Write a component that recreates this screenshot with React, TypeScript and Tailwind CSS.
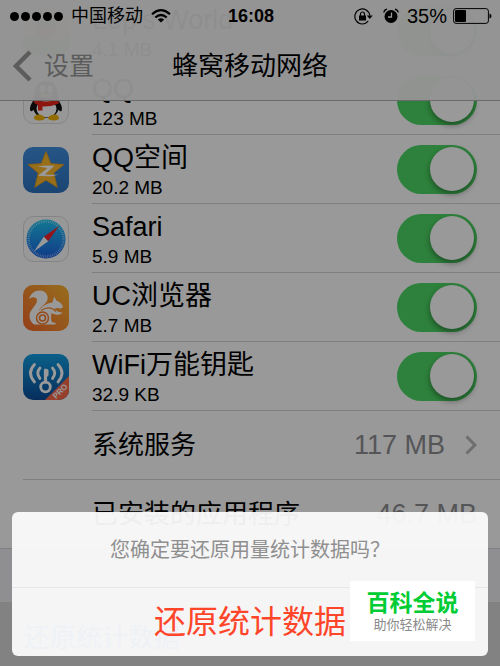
import { useState } from 'react'

type AppRow = {
  id: string
  name: string
  usage: string
  icon: React.ReactNode
}

function WorldIcon() {
  return (
    <svg viewBox="0 0 46 46" className="w-[46px] h-[46px] shrink-0">
      <rect width="46" height="46" rx="10" fill="#f4c9b4" />
      <path d="M0 30q12-8 23-2t23-2v10a10 10 0 0 1-10 10H10A10 10 0 0 1 0 36z" fill="#4fbf3d" />
      <circle cx="23" cy="20" r="10" fill="#c98a52" />
      <path d="M11 17q12-16 24 0z" fill="#2f9e3a" />
    </svg>
  )
}

function QQIcon() {
  return (
    <svg viewBox="0 0 46 46" className="w-[46px] h-[46px] shrink-0">
      <rect x=".5" y=".5" width="45" height="45" rx="10" fill="#fcfcfc" stroke="#dcdcdc" />
      <path d="M12 21C8 25 6 30 7.500 33c1 1 3-1 5-3zM34 21c4 4 6 9 4.500 12-1 1-3-1-5-3z" fill="#111" />
      <path d="M23 3c-8 0-11.500 6-11.500 13C8 25 8.500 40 23 40s15-15 11.500-24C34.500 9 31 3 23 3z" fill="#111" />
      <ellipse cx="23.500" cy="31" rx="10" ry="8.500" fill="#fff" />
      <path d="M11 40c0-2.500 3-4 5.500-3.500 2.500.5 5.500 2 5.500 3.500 0 1.600-3 2.500-6 2.500s-5-.9-5-2.500zM36 40c0-2.500-3-4-5.500-3.500-2.500.5-5.500 2-5.500 3.500 0 1.600 3 2.500 6 2.500s5-.9 5-2.500z" fill="#f5b400" />
      <ellipse cx="19.500" cy="11" rx="2.800" ry="4" fill="#fff" />
      <ellipse cx="27" cy="11" rx="2.800" ry="4" fill="#fff" />
      <ellipse cx="23" cy="17.500" rx="6.500" ry="2" fill="#f5ac00" />
      <path d="M11 21q12 5 24 0l1 4.500q-8 3.500-16.500 3v4H15V27q-2.500-1-4-2.500z" fill="#e8271b" />
    </svg>
  )
}

function QzoneIcon() {
  return (
    <svg viewBox="0 0 46 46" className="w-[46px] h-[46px] shrink-0">
      <defs>
        <linearGradient id="qzone" x1="0" y1="0" x2="0" y2="1">
          <stop offset="0" stopColor="#3f8fe0" />
          <stop offset="1" stopColor="#2c74c0" />
        </linearGradient>
      </defs>
      <rect width="46" height="46" rx="10" fill="url(#qzone)" />
      <path
        d="M23 4.500l4.800 12.100 13.200.9-10.200 8.400 3.400 14.400L23 33.200l-11.200 7.100 3.400-14.400L5 17.500l13.200-.9z"
        fill="#fcb92c"
        stroke="#e99b16"
        strokeWidth=".8"
        strokeLinejoin="round"
      />
      <path d="M14.500 19.500q8.500-1.500 17-.8L22 27.200q7 1 13.500.2-7 2.800-20.500 1.400L24.500 21q-5-.6-10-1.500z" fill="#fff" />
    </svg>
  )
}

function SafariIcon() {
  return (
    <svg viewBox="0 0 46 46" className="w-[46px] h-[46px] shrink-0">
      <defs>
        <linearGradient id="safari" x1="0" y1="0" x2="0" y2="1">
          <stop offset="0" stopColor="#1fc8f5" />
          <stop offset="1" stopColor="#1d62e4" />
        </linearGradient>
      </defs>
      <rect x=".5" y=".5" width="45" height="45" rx="10" fill="#fdfdfd" stroke="#dcdcdc" />
      <circle cx="23" cy="23" r="19.500" fill="url(#safari)" />
      <circle cx="23" cy="23" r="17.500" fill="none" stroke="#fff" strokeWidth="2.500" strokeDasharray=".6 1.230" opacity=".65" />
      <path d="M36 10L20.800 20.800 25.200 25.200z" fill="#f5222d" />
      <path d="M11 35.500L20.800 20.800 25.200 25.200z" fill="#fff" />
    </svg>
  )
}

function UCIcon() {
  return (
    <svg viewBox="0 0 46 46" className="w-[46px] h-[46px] shrink-0">
      <defs>
        <linearGradient id="uc" x1="1" y1="0" x2="0" y2="1">
          <stop offset="0" stopColor="#fdb733" />
          <stop offset="1" stopColor="#f7692a" />
        </linearGradient>
      </defs>
      <rect width="46" height="46" rx="10" fill="url(#uc)" />
      <path d="M6 14C7.500 8.500 12 5.300 17 5.500c5.500.2 8.500 4.500 7.500 9-1 4.500-6.500 6-9 11.500 3.500-4.500 7-7.500 14-8.500l1.700-6 2.300 4.200c3 .8 5.500 3 6.500 6-.8 1.600-2.500 2-4.500 1.600-1.600-.4-3-.2-4 .7 2.500 2.300 5 3.500 8 3.700-3.500 3-7.500 2.300-11 .3L28 32c.3 2.500.2 4.500 1.200 5.300l3.300.5v1.700H11C8 37.500 6.300 34 6.500 30c.3-5.500 8-10 7.500-15-.4-3.500-5-3.500-8-1z" fill="#fff" />
      <path d="M18 25.500q9-5.500 15 1" fill="none" stroke="#f98a2f" strokeWidth="1.200" />
      <circle cx="19.500" cy="33" r="6" fill="#fff" stroke="#f77c2b" strokeWidth="1.500" />
      <circle cx="19.500" cy="33" r="3" fill="#fff" stroke="#f77c2b" strokeWidth="1.600" />
    </svg>
  )
}

function WifiKeyIcon() {
  return (
    <svg viewBox="0 0 46 46" className="w-[46px] h-[46px] shrink-0">
      <defs>
        <linearGradient id="wifikey" x1="0" y1="0" x2="0" y2="1">
          <stop offset="0" stopColor="#12a0e4" />
          <stop offset="1" stopColor="#0c4d9b" />
        </linearGradient>
        <clipPath id="wifikeyClip">
          <rect width="46" height="46" rx="10" />
        </clipPath>
      </defs>
      <g clipPath="url(#wifikeyClip)">
        <rect width="46" height="46" fill="url(#wifikey)" />
        <path d="M46 22v24H22z" fill="#fb6a4c" />
      </g>
      <g fill="none" stroke="#fff" strokeWidth="2.800" strokeLinecap="round">
        <path d="M11.500 10.500q-8 8.500 0 17.500M17 14q-4.500 5 0 10.500M35 10.500q8 8.500 0 17.500M29.500 14q4.500 5 0 10.500" />
        <circle cx="22.500" cy="33" r="4.800" />
        <path d="M22.500 28V16" strokeWidth="3.200" />
        <path d="M24 16.500v4.500" strokeWidth="3" />
      </g>
      <text x="37" y="40" fontSize="8" textAnchor="middle" fill="#fff" fontFamily="Liberation Sans, sans-serif" fontWeight="bold" transform="rotate(-45 37 37)">
        PRO
      </text>
    </svg>
  )
}

function Chevron() {
  return (
    <svg viewBox="0 0 12 20" className="w-3 h-5 shrink-0" fill="none" stroke="#b8b8bc" strokeWidth="3">
      <path d="M1.500 1.500L10 10l-8.500 8.500" />
    </svg>
  )
}

const apps: AppRow[] = [
  { id: 'world', name: "Lep's World", usage: '4.1 MB', icon: <WorldIcon /> },
  { id: 'qq', name: 'QQ', usage: '123 MB', icon: <QQIcon /> },
  { id: 'qzone', name: 'QQ空间', usage: '20.2 MB', icon: <QzoneIcon /> },
  { id: 'safari', name: 'Safari', usage: '5.9 MB', icon: <SafariIcon /> },
  { id: 'uc', name: 'UC浏览器', usage: '2.7 MB', icon: <UCIcon /> },
  { id: 'wifikey', name: 'WiFi万能钥匙', usage: '32.9 KB', icon: <WifiKeyIcon /> },
]

function StatusBar() {
  return (
    <div className="grid grid-cols-[1fr_auto_1fr] items-center h-8 pl-[10px] pr-2">
      <div className="flex items-center">
        <div className="flex gap-0.5">
          {[0, 1, 2, 3, 4].map(i => (
            <span key={i} className="w-[9px] h-[9px] rounded-full bg-black" />
          ))}
        </div>
        <span className="ml-2 text-[18px] leading-6">中国移动</span>
        <svg viewBox="0 0 20 14" className="w-5 h-[14px] ml-2" fill="none" stroke="#000" strokeWidth="2.200">
          <path d="M1 5.200q9-8 18 0M4.300 8.500q5.700-5 11.400 0" />
          <path d="M10 13.500L6.800 10.500q3.200-2.500 6.400 0z" fill="#000" stroke="none" />
        </svg>
      </div>
      <span className="text-[18px] leading-6 font-bold">16:08</span>
      <div className="flex items-center justify-end">
        <svg viewBox="0 0 19 17" className="w-[19px] h-[17px]" fill="none" stroke="#000" strokeWidth="1.200">
          <path d="M14.200 13.200A7.500 7.500 0 1 1 15.800 7.500" />
          <path d="M12.800 7.400h6l-3 3.600z" fill="#000" stroke="none" />
          <rect x="5" y="7.500" width="7" height="5" fill="#000" stroke="none" />
          <path d="M6.500 8V6a2 2 0 0 1 4 0v2" />
        </svg>
        <svg viewBox="0 0 16 16" className="w-4 h-4 ml-[10px]" fill="none" stroke="#000">
          <circle cx="8" cy="8.500" r="6.500" fill="#000" stroke="none" />
          <path d="M.8 4.500Q1.300 1.800 4 1.200M15.200 4.500Q14.700 1.800 12 1.200" strokeWidth="1.300" />
          <path d="M8.500 4.500V9H5" stroke="#fff" strokeWidth="1.300" />
        </svg>
        <span className="ml-2 text-[20px] leading-6">35%</span>
        <svg viewBox="0 0 39 16" className="w-[39px] h-4 ml-[6px]">
          <rect x=".6" y=".6" width="34.800" height="14.800" rx="2.500" fill="none" stroke="#000" strokeWidth="1" />
          <rect x="2" y="2" width="11" height="12" rx="1" fill="#000" />
          <path d="M36.500 5.500q2 .5 2 2.500t-2 2.500z" fill="#000" />
        </svg>
      </div>
    </div>
  )
}

export default function App() {
  const [enabled, setEnabled] = useState<Record<string, boolean>>(
    Object.fromEntries(apps.map(app => [app.id, true]))
  )

  function toggle(id: string) {
    setEnabled(prev => ({ ...prev, [id]: !prev[id] }))
  }

  return (
    <div className="relative h-screen overflow-hidden bg-[#efeff4] text-black font-['Liberation_Sans','Noto_Sans_CJK_SC',sans-serif]">
      {/* Usage list, scrolled up underneath the nav bar */}
      <main className="-mt-[3px]">
        <ul className="bg-white">
          {apps.map(app => (
            <li key={app.id} className="flex h-[69px] pl-[23px]">
              <div className="flex items-center w-[69px]">{app.icon}</div>
              <div className="flex flex-1 items-center justify-between pr-[23px] border-b border-[#d4d4d8]">
                <label htmlFor={app.id} className="flex flex-col pt-[6px]">
                  <span className="text-[27px] leading-8">{app.name}</span>
                  <span className="text-[19px] leading-7">{app.usage}</span>
                </label>
                <input
                  id={app.id}
                  type="checkbox"
                  role="switch"
                  checked={enabled[app.id]}
                  onChange={() => toggle(app.id)}
                  className="appearance-none flex items-center w-20 h-[49px] px-[3px] rounded-full bg-[#e5e5ea] checked:bg-[#4cd864] checked:justify-end before:block before:w-11 before:h-11 before:rounded-full before:bg-white before:shadow-[0_3px_6px_rgba(0,0,0,0.4)]"
                />
              </div>
            </li>
          ))}
          <li className="pl-[23px]">
            <a href="#system" className="flex items-center h-[69px] pl-[69px] pr-[23px] border-b border-[#d4d4d8]">
              <span className="flex-1 text-[26px] leading-8">系统服务</span>
              <span className="mr-5 text-[27px] leading-8 text-[#8e8e93]">117 MB</span>
              <Chevron />
            </a>
          </li>
          <li className="flex items-center h-[69px] pl-[92px] pr-[23px] border-b border-[#d4d4d8]">
            <span className="flex-1 text-[26px] leading-8">已安装的应用程序</span>
            <span className="text-[27px] leading-8 text-[#8e8e93]">46.7 MB</span>
          </li>
        </ul>
        <button className="block w-full h-[72px] mt-[53px] pl-6 text-left text-[26px] leading-8 text-[#0a7aff] bg-[#d9d9d9]">
          还原统计数据
        </button>
      </main>

      {/* Status bar + nav bar */}
      <header className="absolute inset-x-0 top-0 bg-[#f7f7f7]/96 border-b border-[#b2b2b2]">
        <StatusBar />
        <nav className="grid grid-cols-[1fr_auto_1fr] items-center h-[68px] px-3">
          <a href="#settings" className="flex items-center gap-3 text-[25px] leading-8 text-[#999]">
            <svg viewBox="0 0 20 32" className="w-5 h-8" fill="none" stroke="currentColor" strokeWidth="4.500">
              <path d="M18 2L4 16l14 14" />
            </svg>
            设置
          </a>
          <h1 className="text-[26px] leading-8">蜂窝移动网络</h1>
        </nav>
      </header>

      <div className="absolute inset-0 bg-black/40" />

      {/* Action sheet */}
      <div role="dialog" aria-labelledby="sheet-title" className="absolute inset-x-3 bottom-[10px] rounded-md bg-[#fbfbfb]/95">
        <p id="sheet-title" className="flex items-center justify-center h-[76px] text-[20px] leading-7 text-[#8f8f8f] border-b border-[#e6e6e8]">
          您确定要还原用量统计数据吗？
        </p>
        <button className="block w-full h-[68px] text-[32px] leading-10 text-[#ff4529]">还原统计数据</button>
      </div>

      {/* Watermark */}
      <div className="absolute right-[25px] bottom-[25px] flex flex-col items-center justify-center w-[125px] h-[60px] bg-white">
        <span className="text-[23px] leading-7 font-bold text-[#00cc33]">百科全说</span>
        <span className="text-[13px] leading-4 text-[#8a8a8a]">助你轻松解决</span>
      </div>
    </div>
  )
}
